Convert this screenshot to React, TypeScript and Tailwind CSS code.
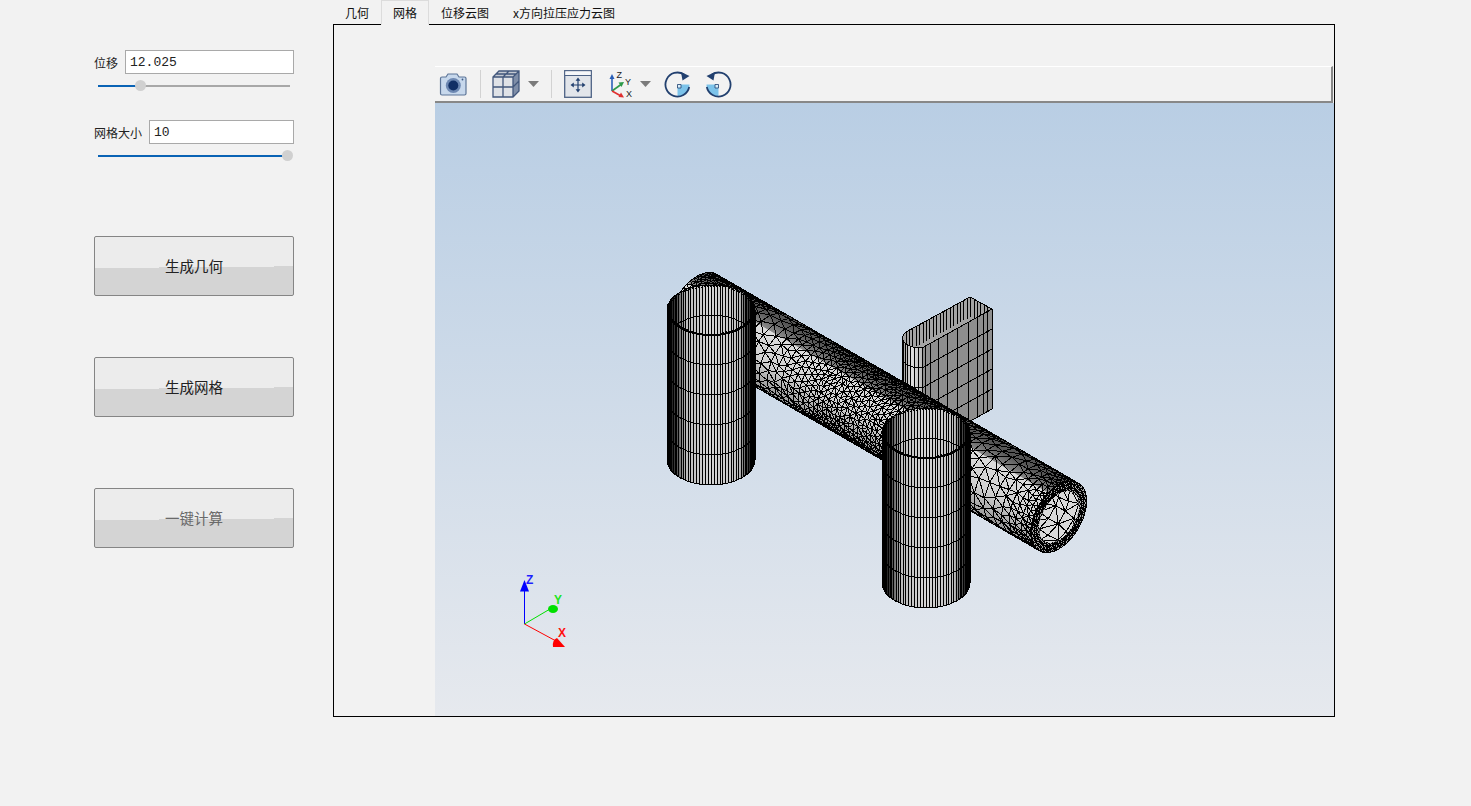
import { useMemo } from "react";

const cjk = "font-['Noto_Sans_CJK_SC','Liberation_Sans',sans-serif]";

// ---- mesh geometry, everything in page pixels ----
type Pt = [number, number];
const C0: Pt = [697, 308];
const C1: Pt = [1059, 517];
const LEN = Math.hypot(C1[0] - C0[0], C1[1] - C0[1]);
const M: Pt = [-19.5, 33.8];
const N: Pt = [19.5, 11.25];
const HOLE = 0.72;

const sizeKnots: Pt[] = [
  [690, 5], [740, 6], [770, 14], [800, 9], [840, 6], [940, 6],
  [975, 10], [1005, 14], [1030, 10], [1059, 5],
];

function sizeAt(x: number) {
  for (let i = 1; i < sizeKnots.length; i++) {
    const [x0, h0] = sizeKnots[i - 1];
    const [x1, h1] = sizeKnots[i];
    if (x <= x1) return h0 + ((h1 - h0) * Math.max(0, x - x0)) / (x1 - x0);
  }
  return 5;
}

function makeRand(seed: number) {
  let v = seed;
  return () => {
    v = (v * 16807) % 2147483647;
    return v / 2147483647;
  };
}

const f = (n: number) => n.toFixed(1);

function tubePoint(s: number, t: number, side: number): Pt {
  const k = s / LEN;
  return [
    C0[0] + (C1[0] - C0[0]) * k + M[0] * Math.sin(t) + side * N[0] * Math.cos(t),
    C0[1] + (C1[1] - C0[1]) * k + M[1] * Math.sin(t) + side * N[1] * Math.cos(t),
  ];
}

function tubeMesh(from: number, to: number, side: number, seed: number, fixed?: number) {
  const rand = makeRand(seed);
  const rings: { s: number; ts: number[] }[] = [];
  let s = from;
  while (s < to) {
    const h = fixed ?? sizeAt(C0[0] + ((C1[0] - C0[0]) * s) / LEN);
    const n = Math.max(6, Math.round(122 / h));
    const ts: number[] = [];
    for (let j = 0; j <= n; j++) {
      const jitter = j === 0 || j === n ? 0 : (rand() - 0.5) * 0.45;
      ts.push(-Math.PI / 2 + (Math.PI * (j + jitter)) / n);
    }
    rings.push({ s, ts });
    s += h * 0.85;
  }
  rings.push({ s: to, ts: rings[rings.length - 1].ts });

  let d = "";
  const line = (a: Pt, b: Pt) => {
    d += `M${f(a[0])} ${f(a[1])}L${f(b[0])} ${f(b[1])}`;
  };
  rings.forEach((ring, r) => {
    for (let j = 1; j < ring.ts.length; j++) {
      line(tubePoint(ring.s, ring.ts[j - 1], side), tubePoint(ring.s, ring.ts[j], side));
    }
    const next = rings[r + 1];
    if (!next) return;
    let i = 0;
    let j = 0;
    while (i < ring.ts.length - 1 || j < next.ts.length - 1) {
      line(tubePoint(ring.s, ring.ts[i], side), tubePoint(next.s, next.ts[j], side));
      const canI = i < ring.ts.length - 1;
      const canJ = j < next.ts.length - 1;
      if (canI && (!canJ || ring.ts[i + 1] < next.ts[j + 1])) i++;
      else j++;
    }
    line(tubePoint(ring.s, ring.ts[i], side), tubePoint(next.s, next.ts[j], side));
  });
  return d;
}

function tubeOutline() {
  const pts: Pt[] = [];
  for (let i = 0; i <= 40; i++) pts.push(tubePoint(LEN, -Math.PI / 2 + (Math.PI * i) / 40, -1));
  for (let i = 40; i >= 0; i--) pts.push(tubePoint(0, -Math.PI / 2 + (Math.PI * i) / 40, -1));
  return pts.map((p) => `${f(p[0])},${f(p[1])}`).join(" ");
}

function endPoint(k: number, a: number): Pt {
  return [
    C1[0] + k * (M[0] * Math.sin(a) + N[0] * Math.cos(a)),
    C1[1] + k * (M[1] * Math.sin(a) + N[1] * Math.cos(a)),
  ];
}

function endEllipse(k: number) {
  const pts: string[] = [];
  for (let i = 0; i < 60; i++) {
    const p = endPoint(k, (Math.PI * 2 * i) / 60);
    pts.push(`${f(p[0])},${f(p[1])}`);
  }
  return pts.join(" ");
}

// the flat end of the pipe wall, a ring of small triangles
function endRing() {
  const layers = 3;
  const n = 40;
  let d = "";
  for (let l = 0; l < layers; l++) {
    const k0 = 1 - ((1 - HOLE) * l) / layers;
    const k1 = 1 - ((1 - HOLE) * (l + 1)) / layers;
    for (let i = 0; i < n; i++) {
      const a0 = (Math.PI * 2 * (i + l * 0.5)) / n;
      const a1 = (Math.PI * 2 * (i + 1 + l * 0.5)) / n;
      const p = endPoint(k0, a0);
      const q = endPoint(k0, a1);
      const r = endPoint(k1, a0);
      d += `M${f(r[0])} ${f(r[1])}L${f(p[0])} ${f(p[1])}L${f(q[0])} ${f(q[1])}L${f(r[0])} ${f(r[1])}`;
    }
  }
  return d;
}

function cylinderLines(cx: number, top: number, rx: number, ry: number, height: number) {
  let side = "";
  let inner = "";
  const count = 46;
  for (let k = 0; k <= count; k++) {
    const t = -Math.PI / 2 + (Math.PI * k) / count;
    const x = cx + rx * Math.sin(t);
    const y = ry * Math.cos(t);
    side += `M${f(x)} ${f(top + y)}V${f(top + y + height)}`;
    inner += `M${f(x)} ${f(top - y)}V${f(top - y + height)}`;
  }
  for (let k = 1; k <= 5; k++) {
    const y = top + (k * height) / 5;
    side += `M${cx - rx} ${y}A${rx} ${ry} 0 0 0 ${cx + rx} ${y}`;
  }
  inner += `M${cx - rx} ${top + 30}A${rx} ${ry} 0 0 1 ${cx + rx} ${top + 30}`;
  return { side, inner };
}

function Cylinder({ id, cx, top }: { id: string; cx: number; top: number }) {
  const rx = 44;
  const ry = 25;
  const height = 150;
  const lines = useMemo(() => cylinderLines(cx, top, rx, ry, height), [cx, top]);
  return (
    <g>
      <clipPath id={id}>
        <ellipse cx={cx} cy={top} rx={rx} ry={ry} />
      </clipPath>
      <path
        d={`M${cx - rx} ${top}V${top + height}A${rx} ${ry} 0 0 0 ${cx + rx} ${top + height}V${top}Z`}
        fill="url(#cylFill)"
      />
      <path d={lines.side} stroke="#000" fill="none" />
      <ellipse cx={cx} cy={top} rx={rx} ry={ry} fill="url(#cylFill)" />
      <path d={lines.inner} stroke="#000" fill="none" clipPath={`url(#${id})`} />
      <ellipse cx={cx} cy={top} rx={rx} ry={ry} stroke="#000" fill="none" />
      <ellipse cx={cx} cy={top} rx={rx - 2} ry={ry - 1.5} stroke="#000" strokeDasharray="1.5 1.5" fill="none" />
      <path
        d={`M${cx - rx + 2} ${top + 1}A${rx - 2} ${ry - 1} 0 0 0 ${cx + rx - 2} ${top + 1}`}
        stroke="#000"
        strokeWidth="2"
        fill="none"
      />
    </g>
  );
}

function Slot() {
  const xs = [925, 930, 938, 947, 957, 968, 977, 983, 987, 992];
  const edge = (x: number) => 348 - ((x - 922) * 39) / 70;
  let face = "";
  xs.forEach((x) => {
    face += `M${x} ${f(edge(x))}V${f(edge(x) + 100)}`;
  });
  let round = "";
  [902, 903, 905, 907, 910, 914, 918, 922].forEach((x) => {
    const k = (x - 902) / 20;
    const top = 338 + 10 * Math.sqrt(k);
    round += `M${x} ${f(top)}V${f(top + 100)}`;
  });
  let rings = "";
  for (let k = 1; k <= 5; k++) {
    const d = k * 20;
    rings += `M902 ${338 + d}Q905 ${348 + d} 922 ${348 + d}L992 ${309 + d}`;
  }
  let back = "";
  for (let x = 906; x <= 992; x += 3.4) {
    const y = x <= 970 ? 332 - ((x - 906) * 35) / 64 : 297 + ((x - 970) * 12) / 22;
    back += `M${f(x)} ${f(y)}V${f(y + 20)}`;
  }
  const opening = "M902 338Q903 334 906 332L970 297L992 309L922 348Q905 348 902 338Z";
  return (
    <g>
      <clipPath id="slotOpen">
        <path d={opening} />
      </clipPath>
      <path d="M922 348L992 309V409L922 448Z" fill="#8e8e8e" />
      <path d="M902 338Q905 348 922 348V448H902Z" fill="url(#slotRound)" />
      <path d={face + round + rings} stroke="#000" fill="none" />
      <path d={opening} fill="#a4a4a4" />
      <path d={back} stroke="#000" fill="none" clipPath="url(#slotOpen)" />
      <path d={opening} stroke="#000" fill="none" />
    </g>
  );
}

function MeshView() {
  const { outer, interior, outline, end, hole, ring } = useMemo(
    () => ({
      outer: tubeMesh(0, LEN, -1, 4711),
      interior: tubeMesh(LEN - 130, LEN, 1, 991, 13),
      outline: tubeOutline(),
      end: endEllipse(1),
      hole: endEllipse(HOLE),
      ring: endRing(),
    }),
    [],
  );
  return (
    <svg
      className="absolute inset-0"
      width="899"
      height="613"
      viewBox="435 103 899 613"
      shapeRendering="crispEdges"
    >
      <defs>
        <linearGradient id="cylFill" x1="0" x2="1" y1="0" y2="0">
          <stop offset="0" stopColor="#000" />
          <stop offset="0.08" stopColor="#333" />
          <stop offset="0.22" stopColor="#bcbcbc" />
          <stop offset="0.5" stopColor="#d6d6d6" />
          <stop offset="0.82" stopColor="#c0c0c0" />
          <stop offset="0.93" stopColor="#333" />
          <stop offset="1" stopColor="#000" />
        </linearGradient>
        <linearGradient id="slotRound" x1="0" x2="1" y1="0" y2="0">
          <stop offset="0" stopColor="#999" />
          <stop offset="0.5" stopColor="#e0e0e0" />
          <stop offset="1" stopColor="#b8b8b8" />
        </linearGradient>
        <linearGradient id="tubeFill" gradientUnits="userSpaceOnUse" x1="897" x2="858" y1="389" y2="456">
          <stop offset="0" stopColor="#555" />
          <stop offset="0.17" stopColor="#888" />
          <stop offset="0.18" stopColor="#dcdcdc" />
          <stop offset="0.55" stopColor="#d0d0d0" />
          <stop offset="1" stopColor="#808080" />
        </linearGradient>
        <clipPath id="holeClip">
          <polygon points={hole} />
        </clipPath>
      </defs>

      <Slot />

      <polygon points={outline} fill="url(#tubeFill)" />
      <path d={outer} stroke="#000" fill="none" />
      <polygon points={end} fill="#a8a8a8" />
      <path d={ring} stroke="#000" fill="none" />
      <polygon points={hole} fill="#dadada" />
      <path d={interior} stroke="#000" fill="none" clipPath="url(#holeClip)" />

      <Cylinder id="cylA" cx={711} top={310} />
      <Cylinder id="cylB" cx={926} top={433} />

      {/* orientation triad */}
      <g shapeRendering="auto" fontFamily="'Liberation Sans', sans-serif" fontWeight="700" fontSize="12">
        <path d="M524.5 624V590" stroke="#0000ff" />
        <path d="M524.5 580L520 591.5H529Z" fill="#0000ff" />
        <path d="M524.5 624L550 609" stroke="#00e000" />
        <ellipse cx="553" cy="609" rx="5" ry="4" fill="#00e000" />
        <path d="M524.5 624L556 641" stroke="#ff0000" />
        <path d="M565 647L553 647Q552 640 557 638Z" fill="#ff0000" />
        <text x="526" y="584" fill="#1f1fff">Z</text>
        <text x="554" y="604" fill="#22e522">Y</text>
        <text x="558" y="637" fill="#ff1010">X</text>
      </g>
    </svg>
  );
}

// ---- toolbar icons ----
function CameraIcon() {
  return (
    <svg width="28" height="25" viewBox="0 0 28 25" className="ml-1">
      <path
        d="M1.5 6.5Q1.5 5 3 5H7L9 2H18L20 5H25.5Q27 5 27 6.5V21.5Q27 23 25.5 23H3Q1.5 23 1.5 21.5Z"
        fill="#c7d8ec"
        stroke="#5d7597"
        strokeWidth="1.2"
      />
      <circle cx="14.3" cy="13.5" r="7.5" fill="#6d88b2" />
      <circle cx="14.3" cy="13.5" r="5" fill="#123066" />
      <circle cx="23.5" cy="7.5" r="0.9" fill="#3d5a85" />
    </svg>
  );
}

function CubeIcon() {
  return (
    <svg width="28" height="28" viewBox="0 0 28 28" className="ml-[11px]">
      <path d="M1 7L7 1H27V21L21 27H1Z" fill="#dfe2e7" />
      <path d="M21 7L27 1V21L21 27Z" fill="#7f8ea8" />
      <path d="M1 7L7 1H27L21 7Z" fill="#c4c9d2" />
      <path
        d="M1 7L7 1H27V21L21 27H1ZM1 7H21V27M21 7L27 1M11 7V27M1 17H21M11 7L17 1M4 4H24M21 17L27 11"
        fill="none"
        stroke="#42577c"
        strokeWidth="1.3"
      />
    </svg>
  );
}

function ArrowDown({ className }: { className: string }) {
  return (
    <svg width="11" height="6" viewBox="0 0 11 6" className={className}>
      <path d="M0 0H11L5.5 6Z" fill="#7b7b7b" />
    </svg>
  );
}

function FitIcon() {
  const navy = "#22406f";
  return (
    <svg width="28" height="28" viewBox="0 0 28 28" className="ml-3">
      <rect x="0.7" y="0.7" width="26.6" height="26.6" fill="#e2e5ea" stroke="#4d6285" strokeWidth="1.3" />
      <rect x="1.4" y="1.4" width="25.2" height="3.6" fill="#f6f7f9" />
      <path d="M1 5.5H27" stroke="#4d6285" />
      <path d="M14 10V20M9 15H19" stroke={navy} strokeWidth="1.2" />
      <path
        d="M14 7.5L16.4 10.8H11.6ZM14 22.5L11.6 19.2H16.4ZM6.5 15L9.8 12.6V17.4ZM21.5 15L18.2 17.4V12.6Z"
        fill={navy}
      />
    </svg>
  );
}

function AxesIcon() {
  return (
    <svg width="26" height="28" viewBox="0 0 26 28" className="ml-4">
      <path d="M4 21V8" stroke="#2a5fb8" strokeWidth="1.6" />
      <path d="M4 4L1.5 9H6.5Z" fill="#2a5fb8" />
      <path d="M4 21L13 14.5" stroke="#2e9a4a" strokeWidth="1.6" />
      <path d="M16 12L10.5 12.5L13.5 17Z" fill="#2e9a4a" />
      <path d="M4 21L13 26" stroke="#e03030" strokeWidth="1.6" />
      <path d="M16 27.5L10.5 27L13 22.5Z" fill="#e03030" />
      <text x="8.5" y="7.5" fontSize="9" fill="#222" fontFamily="'Liberation Sans', sans-serif">Z</text>
      <text x="17" y="15" fontSize="9" fill="#222" fontFamily="'Liberation Sans', sans-serif">Y</text>
      <text x="18" y="27" fontSize="9" fill="#222" fontFamily="'Liberation Sans', sans-serif">X</text>
    </svg>
  );
}

function RotateIcon({ flip, className }: { flip?: boolean; className: string }) {
  return (
    <svg width="27" height="27" viewBox="0 0 27 27" className={className}>
      <g transform={flip ? "translate(27 0) scale(-1 1)" : undefined}>
        <path d="M13.5 13.5H25.5A12 12 0 0 1 13.5 25.5Z" fill="#7cc3ea" />
        <path d="M20 3.5A12 12 0 1 0 25.2 16" fill="none" stroke="#22406f" strokeWidth="1.8" />
        <path d="M25.5 5L17 1L18.5 9.5Z" fill="#22406f" />
        <path d="M13.5 13.5H17V17H13.5Z" fill="#d8eefa" stroke="#22406f" strokeWidth="0.8" />
      </g>
    </svg>
  );
}

function Toolbar() {
  return (
    <div className="mr-[1px] flex h-[37px] shrink-0 items-center border-t border-r-2 border-b-2 border-t-white border-r-[#888888] border-b-[#888888] bg-[#f2f2f2]">
      <CameraIcon />
      <div className="ml-[13px] h-7 w-px bg-[#d2d2d2]" />
      <CubeIcon />
      <ArrowDown className="ml-2" />
      <div className="ml-3 h-7 w-px bg-[#d2d2d2]" />
      <FitIcon />
      <AxesIcon />
      <ArrowDown className="ml-[6px]" />
      <RotateIcon className="ml-[13px]" />
      <RotateIcon flip className="ml-[14px]" />
    </div>
  );
}

// ---- left panel ----
function Field({ label, value, left, fill, knob }: { label: string; value: string; left: string; fill: string; knob: string }) {
  return (
    <div>
      <div className="flex h-6 items-center">
        <span className={`${left} pt-[1px] text-[12px] leading-none text-[#222222] ${cjk}`}>{label}</span>
        <div className="flex h-6 flex-1 items-center border border-[#a9a9a9] bg-white pt-[1px] pl-[4px] font-['Liberation_Mono',monospace] text-[13px] text-[#222222]">
          {value}
        </div>
      </div>
      <div className="relative mt-[11px] ml-[4px] h-[2px] w-[192px] bg-[#a8a8a8]">
        <div className={`h-full bg-[#0a63b5] ${fill}`} />
        <div className={`absolute top-[-5px] h-[11px] w-[11px] rounded-full bg-[#d0d0d0] ${knob}`} />
      </div>
    </div>
  );
}

function ActionButton({ label, className, muted }: { label: string; className: string; muted?: boolean }) {
  return (
    <button
      type="button"
      className={`flex h-[60px] w-[200px] items-center justify-center rounded-[2px] border border-[#858585] bg-[linear-gradient(179.5deg,#ececec_52%,#d4d4d4_52%)] pb-[1px] text-[14.5px] ${cjk} ${muted ? "text-[#6a6a6a]" : "text-[#222222]"} ${className}`}
    >
      {label}
    </button>
  );
}

function Tab({ label, active }: { label: string; active?: boolean }) {
  return (
    <div
      className={
        active
          ? "z-10 -mb-px flex h-[25px] w-[48px] items-center justify-center border-x border-t border-b border-[#dcdcdc] border-b-[#f2f2f2] bg-[#f2f2f2]"
          : "flex h-6 items-center justify-center px-3 pt-[2px]"
      }
    >
      {label}
    </div>
  );
}

export default function App() {
  return (
    <div className={`flex h-[806px] w-[1471px] overflow-hidden bg-[#f2f2f2] ${cjk}`}>
      <aside className="w-[333px] shrink-0 pt-[50px] pl-[94px]">
        <div className="w-[200px]">
          <Field label="位移" value="12.025" left="w-[31px]" fill="w-[42px]" knob="left-[37px]" />
          <div className="h-[33px]" />
          <Field label="网格大小" value="10" left="w-[55px]" fill="w-[184px]" knob="left-[184px]" />
        </div>
        <ActionButton label="生成几何" className="mt-[79px]" />
        <ActionButton label="生成网格" className="mt-[61px]" />
        <ActionButton label="一键计算" className="mt-[71px]" muted />
      </aside>

      <main className="flex h-[717px] w-[1002px] shrink-0 flex-col">
        <div className="flex h-6 shrink-0 text-[12px] text-[#111111]">
          <Tab label="几何" />
          <Tab label="网格" active />
          <Tab label="位移云图" />
          <Tab label="x方向拉压应力云图" />
        </div>
        <div className="flex min-h-0 flex-1 flex-col border border-black pt-[41px] pl-[101px]">
          <Toolbar />
          <div className="relative flex-1 bg-[linear-gradient(#b9cee4,#e6e9ee)]">
            <MeshView />
          </div>
        </div>
      </main>
    </div>
  );
}
